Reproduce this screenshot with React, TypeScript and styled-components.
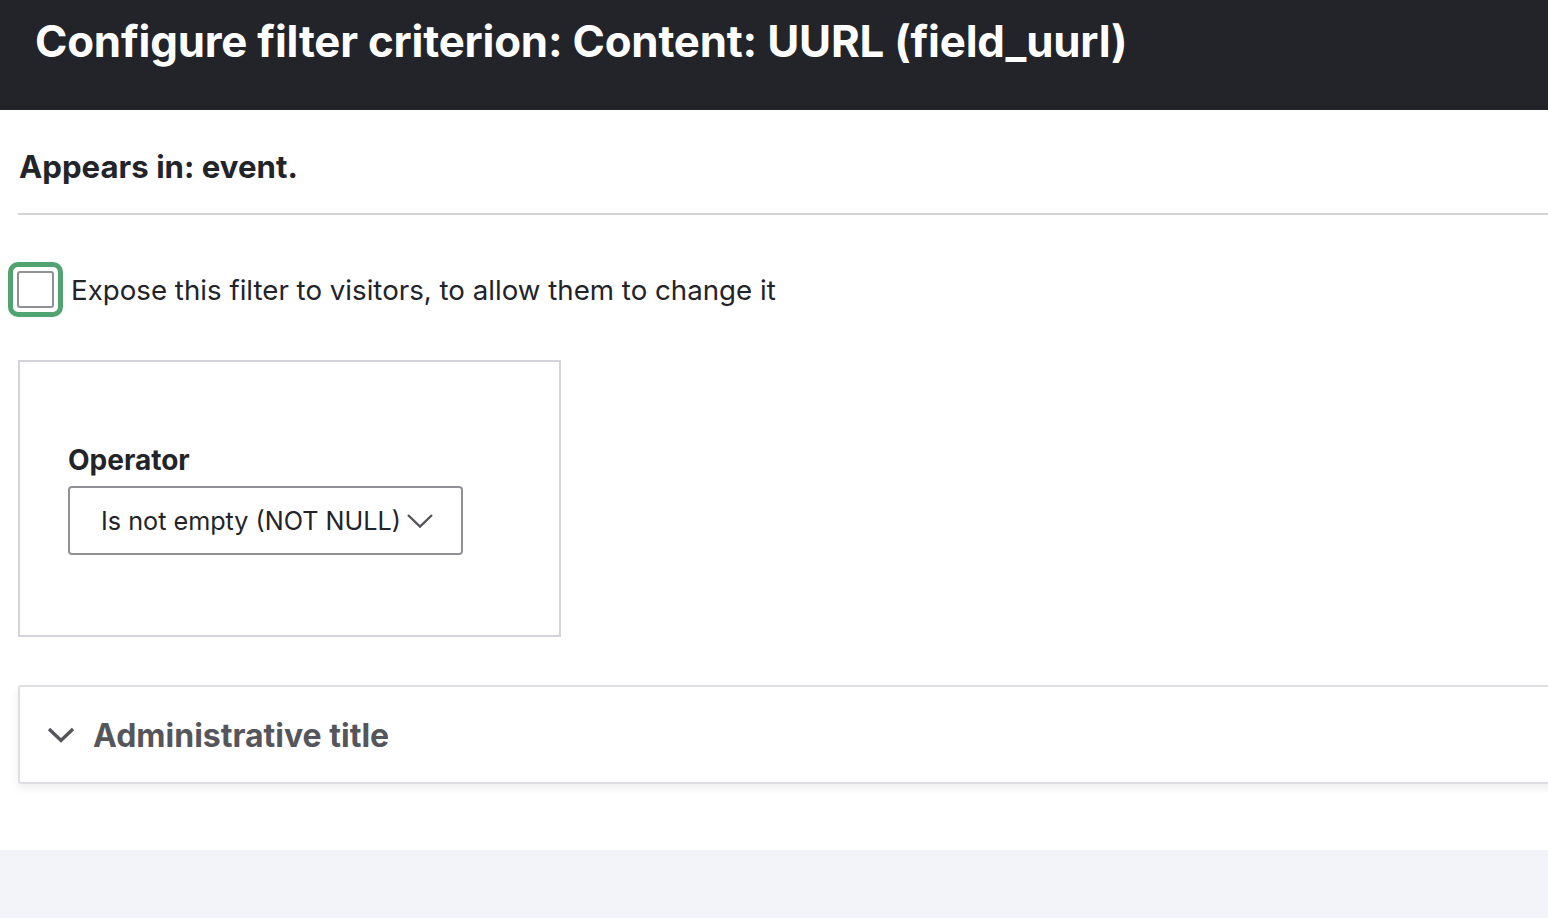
import * as React from 'react';
import styled, { createGlobalStyle } from 'styled-components';

const GlobalStyle = createGlobalStyle`
  html, body {
    margin: 0;
    padding: 0;
    background: #f3f4f9;
    font-family: Inter, 'Noto Sans', sans-serif;
    color: #232429;
  }
`;

const Page = styled.div`
  width: 1548px;
  height: 918px;
  overflow: hidden;
  background: #f3f4f9;
`;

const TitleBar = styled.header`
  height: 110px;
  background: #232429;
  display: flex;
  align-items: flex-start;
  padding: 14px 0 0 35px;
  box-sizing: border-box;
`;

const Title = styled.h1`
  margin: 0;
  font-size: 43.8px;
  line-height: 56px;
  font-weight: 700;
  color: #ffffff;
  letter-spacing: -0.2px;
  white-space: nowrap;
`;

const Body = styled.main`
  background: #ffffff;
  height: 740px;
  padding: 0 0 0 18px;
  box-sizing: border-box;
  display: flex;
  flex-direction: column;
  overflow: hidden;
`;

const Appears = styled.h2`
  margin: 0;
  padding: 37px 0 0 1px;
  height: 105px;
  box-sizing: border-box;
  font-size: 31.2px;
  line-height: 40px;
  font-weight: 700;
  border-bottom: 2px solid #d3d4d9;
  width: 1560px;
`;

const CheckRow = styled.label`
  display: flex;
  align-items: center;
  gap: 8px;
  margin: 47px 0 0 -10px;
  font-size: 27.7px;
  line-height: 36px;
  cursor: pointer;
`;

const FocusRing = styled.span`
  display: flex;
  align-items: center;
  justify-content: center;
  width: 55px;
  height: 55px;
  box-sizing: border-box;
  border: 5px solid #51a46f;
  border-radius: 10px;
`;

const Box = styled.span`
  width: 37px;
  height: 37px;
  box-sizing: border-box;
  border: 2px solid #909196;
  border-radius: 3px;
  background: #fff;
`;

const Fieldset = styled.fieldset`
  margin: 43px 0 0 0;
  padding: 80px 0 0 48px;
  width: 543px;
  height: 277px;
  box-sizing: border-box;
  border: 2px solid #d3d4d9;
  display: flex;
  flex-direction: column;
`;

const FieldLabel = styled.span`
  font-size: 28px;
  line-height: 36px;
  font-weight: 700;
  margin-bottom: 8px;
`;

const Select = styled.div`
  width: 395px;
  height: 69px;
  box-sizing: border-box;
  border: 2px solid #909196;
  border-radius: 4px;
  display: flex;
  align-items: center;
  padding-left: 31px;
  gap: 5px;
  font-size: 25.2px;
  color: #232429;
`;

const Details = styled.section`
  margin: 48px 0 0 0;
  width: 1560px;
  height: 99px;
  box-sizing: border-box;
  border: 2px solid #dedfe3;
  border-radius: 3px;
  box-shadow: 0 4px 8px rgba(35, 36, 41, 0.08);
  display: flex;
  align-items: center;
  padding: 1px 0 0 27px;
  gap: 18px;
`;

const Summary = styled.span`
  font-size: 32px;
  font-weight: 700;
  color: #55565b;
`;

const Chevron = ({ weight }: { weight: number }) => (
  <svg width={28} height={16} viewBox="0 0 28 16" fill="none">
    <path d="M2 2 L14 13.5 L26 2" stroke="#55565b" strokeWidth={weight} />
  </svg>
);

const App = (): JSX.Element => {
  return (
    <Page>
      <GlobalStyle />
      <TitleBar>
        <Title>{'Configure filter criterion: Content: UURL (field_uurl)'}</Title>
      </TitleBar>
      <Body>
        <Appears>{'Appears in: event.'}</Appears>
        <CheckRow>
          <FocusRing>
            <Box />
          </FocusRing>
          {'Expose this filter to visitors, to allow them to change it'}
        </CheckRow>
        <Fieldset>
          <FieldLabel>{'Operator'}</FieldLabel>
          <Select>
            {'Is not empty (NOT NULL)'}
            <Chevron weight={2.4} />
          </Select>
        </Fieldset>
        <Details>
          <Chevron weight={3.4} />
          <Summary>{'Administrative title'}</Summary>
        </Details>
      </Body>
    </Page>
  );
};

export default App;
